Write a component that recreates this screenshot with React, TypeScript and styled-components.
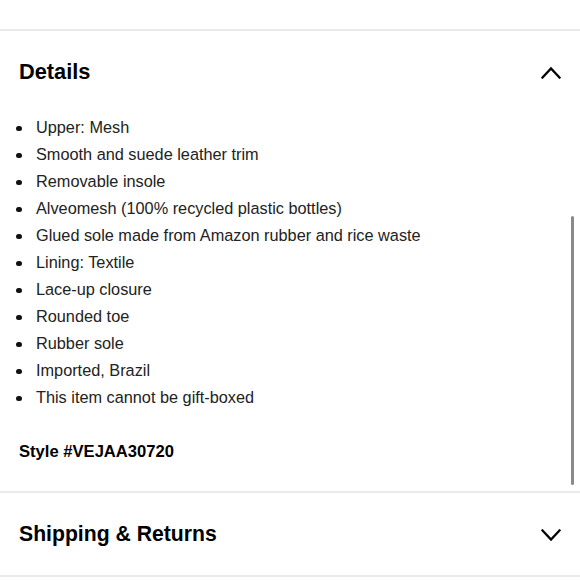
import React from 'react';
import styled, { createGlobalStyle } from 'styled-components';

const GlobalStyle = createGlobalStyle`
  html, body {
    margin: 0;
    padding: 0;
    background: #fff;
  }
  body {
    font-family: "Liberation Sans", Arial, sans-serif;
    color: #1a1a1a;
  }
`;

// Контейнер страницы
const Page = styled.div`
  position: relative;
  width: 580px;
  height: 580px;
  overflow: hidden;
  background: #fff;
`;

const TopSpace = styled.div`
  height: 29px;
`;

const Divider = styled.div`
  height: 2px;
  background: #ebebea;
`;

const SectionHeader = styled.div`
  display: flex;
  justify-content: space-between;
  align-items: center;
  padding: 28px 19px 28px 19px;
`;

const SectionTitle = styled.h2<{ $tight?: boolean }>`
  margin: 0;
  font-size: ${props => (props.$tight ? '21.2px' : '21.8px')};
  line-height: 26px;
  font-weight: 700;
  color: #000;
`;

const Chevron = styled.svg<{ $up?: boolean }>`
  width: 20px;
  height: 13px;
  display: block;
  margin-top: ${props => (props.$up ? '1px' : '3px')};
`;

const List = styled.ul`
  list-style: none;
  margin: 1px 0 0;
  padding: 0 16px;
`;

const Item = styled.li`
  display: flex;
  align-items: center;
  height: 27px;
  font-size: 16.3px;
  color: #222;
`;

const Bullet = styled.span`
  width: 5.5px;
  height: 5.5px;
  border-radius: 50%;
  background: #111;
  margin: 2px 14.5px 0 0;
  flex: none;
`;

const StyleNumber = styled.div`
  margin-top: 29px;
  padding: 0 19px 27px;
  font-size: 16.6px;
  line-height: 24px;
  font-weight: 700;
  color: #000;
`;

const Scrollbar = styled.div`
  position: absolute;
  left: 571px;
  top: 216px;
  width: 3px;
  height: 269px;
  border-radius: 2px;
  background: #8a8a8a;
`;

const details = [
  'Upper: Mesh',
  'Smooth and suede leather trim',
  'Removable insole',
  'Alveomesh (100% recycled plastic bottles)',
  'Glued sole made from Amazon rubber and rice waste',
  'Lining: Textile',
  'Lace-up closure',
  'Rounded toe',
  'Rubber sole',
  'Imported, Brazil',
  'This item cannot be gift-boxed',
];

const ChevronIcon = ({ up }: { up?: boolean }) => (
  <Chevron $up={up} viewBox="0 0 20 13" fill="none">
    <path
      d={up ? 'M1.5 11.5 L10 2.5 L18.5 11.5' : 'M1.5 1.5 L10 10.5 L18.5 1.5'}
      stroke="#000"
      strokeWidth="2.3"
      strokeLinecap="square"
      strokeLinejoin="miter"
    />
  </Chevron>
);

export default function App() {
  return (
    <Page>
      <GlobalStyle />
      <TopSpace />
      <Divider />
      <SectionHeader>
        <SectionTitle>Details</SectionTitle>
        <ChevronIcon up />
      </SectionHeader>
      <List>
        {details.map(text => (
          <Item key={text}>
            <Bullet />
            {text}
          </Item>
        ))}
      </List>
      <StyleNumber>Style #VEJAA30720</StyleNumber>
      <Divider />
      <SectionHeader>
        <SectionTitle $tight>Shipping &amp; Returns</SectionTitle>
        <ChevronIcon />
      </SectionHeader>
      <Divider />
      <Scrollbar />
    </Page>
  );
}
